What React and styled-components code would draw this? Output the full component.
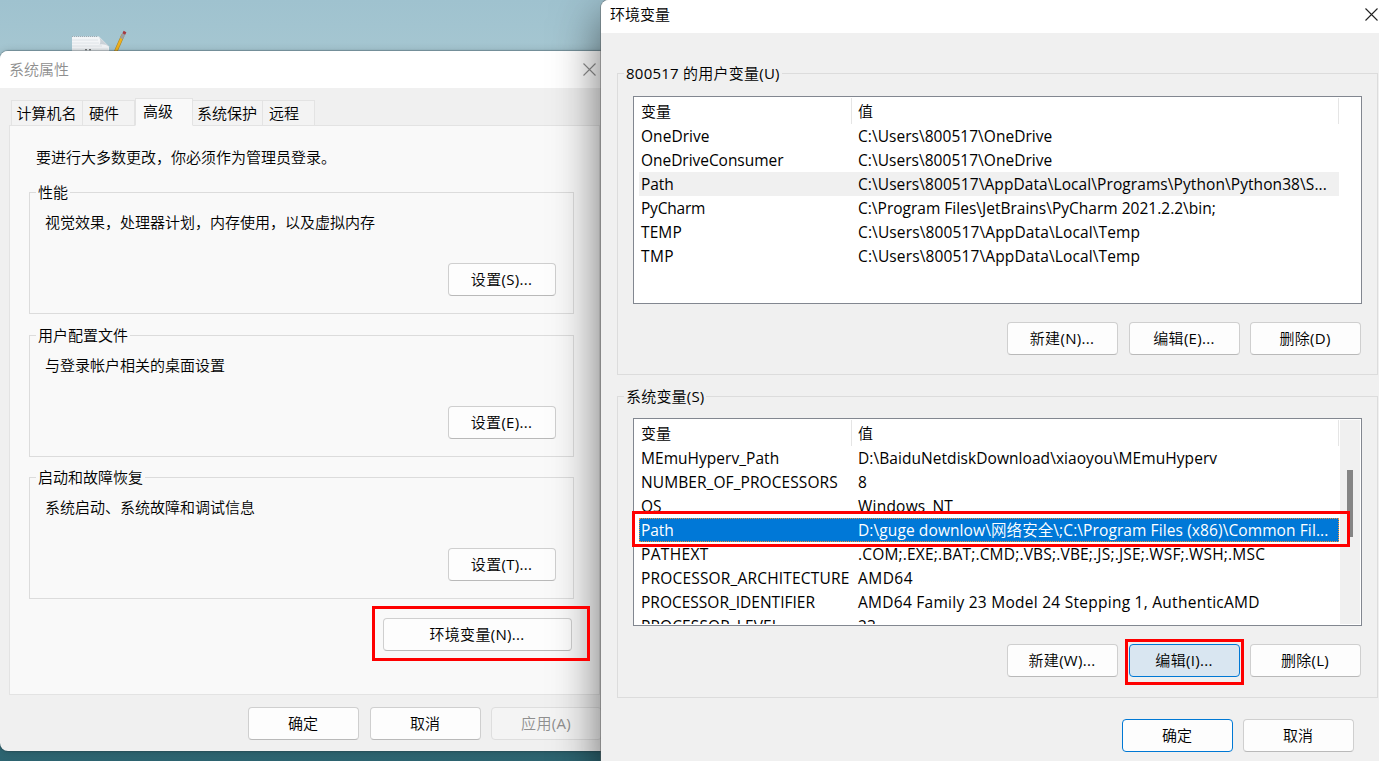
import React from "react";
import styled, { createGlobalStyle } from "styled-components";

const GlobalStyle = createGlobalStyle`
  * { box-sizing: border-box; }
  body {
    margin: 0;
    overflow: hidden;
    font-family: "Open Sans", "Noto Sans CJK SC DemiLight", "Noto Sans CJK SC", sans-serif;
    font-size: 15px;
    line-height: 20px;
    color: #000;
  }
`;

const Desktop = styled.main`
  position: relative;
  width: 1379px;
  height: 761px;
  overflow: hidden;
  background: linear-gradient(180deg, #9fc2cf 0, #a5c6d1 50px, #2f6a77 745px, #2d6470 761px);
`;

const FileIcon = styled.svg`
  position: absolute;
  left: 70px;
  top: 30px;
`;

const Window = styled.section`
  position: absolute;
  left: ${(p) => p.$x}px;
  top: ${(p) => p.$y}px;
  width: ${(p) => p.$w}px;
  height: ${(p) => p.$h}px;
  display: flex;
  flex-direction: column;
  background: #f0f0f0;
  border-radius: 8px;
  overflow: hidden;
  box-shadow: ${(p) => p.$shadow};
`;

const TitleBar = styled.header`
  display: flex;
  flex: none;
  align-items: center;
  justify-content: space-between;
  height: ${(p) => p.$h}px;
  padding: ${(p) => p.$pad};
  background: #fff;
  color: ${(p) => p.$color};
`;

const TitleText = styled.span`
  padding-bottom: 2px;
`;

const Tabs = styled.nav`
  display: flex;
  align-items: flex-end;
  height: 38px;
  padding-left: 11px;
  flex: none;
`;

const Tab = styled.div`
  width: ${(p) => p.$w}px;
  height: ${(p) => (p.$active ? 28 : 26)}px;
  padding: 2px 0 0 ${(p) => p.$pad}px;
  border: 1px solid #e3e3e3;
  border-left-width: ${(p) => (p.$first || p.$active ? 1 : 0)}px;
  border-bottom-color: ${(p) => (p.$active ? "#f9f9f9" : "#e3e3e3")};
  background: ${(p) => (p.$active ? "#f9f9f9" : "#f3f3f3")};
  white-space: nowrap;
  z-index: 1;
`;

const TabPanel = styled.div`
  width: 591px;
  height: 570px;
  margin: -1px 0 0 9px;
  padding: 21px 0 0 19px;
  border: 1px solid #e3e3e3;
  background: #f9f9f9;
  flex: none;
`;

const Notice = styled.p`
  margin: 0 0 0 7px;
`;

const Group = styled.div`
  width: ${(p) => p.$w}px;
  height: ${(p) => p.$h}px;
  margin-top: ${(p) => p.$mt}px;
  border: 1px solid #dcdcdc;
  display: flex;
  flex-direction: column;
`;

const Legend = styled.div`
  width: fit-content;
  margin: -11px 0 0 6px;
  padding: 0 2px;
  background: ${(p) => p.$bg};
  letter-spacing: ${(p) => p.$ls || 0}px;
`;

const Description = styled.p`
  margin: 10px 0 0 15px;
`;

const Actions = styled.div`
  display: flex;
  gap: ${(p) => p.$gap || 11}px;
  margin-top: ${(p) => p.$mt}px;
  padding-left: ${(p) => p.$x}px;
`;

const Button = styled.button`
  width: ${(p) => p.$w || 111}px;
  height: 33px;
  padding: 0 1px 1px 0;
  flex: none;
  font: inherit;
  letter-spacing: ${(p) => p.$ls ?? 0.3}px;
  border-radius: 4px;
  border: 1px solid #cfcfcf;
  border-bottom-color: #b9b9b9;
  background: #fdfdfd;
  color: #000;
  ${(p) => p.$kind === "disabled" && "border-color:#dedede;background:#f4f4f4;color:#8f8f8f;"}
  ${(p) => p.$kind === "default" && "border-color:#0078d4;"}
  ${(p) => p.$kind === "hot" && "border-color:#0078d4;background:#d9e6f1;"}
  ${(p) => p.$last && "margin-left:-1px;"}
`;

const Marked = styled.div`
  position: relative;
  display: flex;
`;

const Mark = styled.span`
  position: absolute;
  inset: ${(p) => p.$inset};
  border: 3px solid #fe0000;
  pointer-events: none;
  z-index: 2;
`;

const ListBox = styled.div`
  position: relative;
  width: 729px;
  height: 208px;
  margin: ${(p) => p.$mt}px 0 0 15px;
  border: 1px solid #828790;
  background: #fff;
  flex: none;
`;

const ListClip = styled.div`
  height: 205px;
  padding: 1px 0 0 5px;
  overflow: hidden;
`;

const HeadRow = styled.div`
  display: grid;
  grid-template-columns: 213px 487px;
  height: 26px;
`;

const HeadCell = styled.div`
  padding: 3px 0 0 ${(p) => p.$pad}px;
  border-right: 1px solid #e5e5e5;
`;

const Row = styled.div`
  display: grid;
  grid-template-columns: 219px 481px;
  width: 700px;
  height: 24px;
  line-height: 24px;
  font-size: 15.5px;
  background: ${(p) => (p.$selected ? "#0078d7" : p.$muted ? "#f0f0f0" : "transparent")};
  color: ${(p) => (p.$selected ? "#fff" : "#000")};
  outline: ${(p) => (p.$selected ? "1px dotted #ff9233" : "none")};
  outline-offset: -1px;
`;

const Cell = styled.span`
  padding-left: ${(p) => p.$pad || 0}px;
  letter-spacing: ${(p) => p.$ls}px;
  white-space: pre;
`;

const ScrollTrack = styled.div`
  position: absolute;
  top: 1px;
  right: 1px;
  width: 20px;
  height: 204px;
  padding: 50px 0 0 7px;
  background: #f0f0f0;
`;

const ScrollThumb = styled.div`
  width: 6px;
  height: 67px;
  background: #858585;
`;

const CloseIcon = ({ color }) => (
  <svg width="13" height="13" viewBox="0 0 13 13" fill="none" stroke={color} strokeWidth="1.1">
    <path d="M.5 .5l12 12M12.5 .5l-12 12" />
  </svg>
);

const userVars = [
  ["OneDrive", 0.05, "C:\\Users\\800517\\OneDrive", 0.04],
  ["OneDriveConsumer", -0.04, "C:\\Users\\800517\\OneDrive", 0.04],
  ["Path", -0.1, "C:\\Users\\800517\\AppData\\Local\\Programs\\Python\\Python38\\S...", 0.08],
  ["PyCharm", -0.2, "C:\\Program Files\\JetBrains\\PyCharm 2021.2.2\\bin;", 0.01],
  ["TEMP", 0.1, "C:\\Users\\800517\\AppData\\Local\\Temp", 0.13],
  ["TMP", 0.4, "C:\\Users\\800517\\AppData\\Local\\Temp", 0.13],
];

const systemVars = [
  ["MEmuHyperv_Path", 0.04, "D:\\BaiduNetdiskDownload\\xiaoyou\\MEmuHyperv", 0.06],
  ["NUMBER_OF_PROCESSORS", 0.08, "8", 0],
  ["OS", 0, "Windows_NT", 0.22],
  ["Path", -0.1, "D:\\guge downlow\\网络安全\\;C:\\Program Files (x86)\\Common Fil...", 0.1],
  ["PATHEXT", 0.35, ".COM;.EXE;.BAT;.CMD;.VBS;.VBE;.JS;.JSE;.WSF;.WSH;.MSC", 0.18],
  ["PROCESSOR_ARCHITECTURE", 0.18, "AMD64", 0.45],
  ["PROCESSOR_IDENTIFIER", 0, "AMD64 Family 23 Model 24 Stepping 1, AuthenticAMD", 0.26],
  ["PROCESSOR_LEVEL", 0.1, "23", 0.05],
];

const VariableList = ({ rows, mt, muted, selected, scroll }) => (
  <ListBox $mt={mt}>
    <ListClip>
      <HeadRow>
        <HeadCell $pad={2}>变量</HeadCell>
        <HeadCell $pad={6}>值</HeadCell>
      </HeadRow>
      {rows.map(([name, nameLs, value, valueLs], i) => (
        <Row key={name} $muted={i === muted} $selected={i === selected}>
          <Cell $pad={2} $ls={nameLs}>{name}</Cell>
          <Cell $ls={valueLs}>{value}</Cell>
        </Row>
      ))}
    </ListClip>
    {scroll && <ScrollTrack><ScrollThumb /></ScrollTrack>}
    {selected !== undefined && <Mark $inset="92px 11px 78px -2px" />}
  </ListBox>
);

const SettingsGroup = ({ title, text, button, mt }) => (
  <Group $w={545} $h={122} $mt={mt}>
    <Legend $bg="#f9f9f9">{title}</Legend>
    <Description>{text}</Description>
    <Actions $mt={31} $x={418}><Button $w={108}>{button}</Button></Actions>
  </Group>
);

export default function App() {
  return (
    <Desktop lang="zh-CN">
      <GlobalStyle />
      <FileIcon width="60" height="24" viewBox="0 0 60 24">
        <path d="M2 6.5h27l10 10V24H2z" fill="#f3f5f7" />
        <path d="M2 10h26M2 13h27M2 16h30M2 19h36" stroke="#d9dfe4" strokeWidth=".8" />
        <path d="M2 6.5h26" stroke="#9da9b1" strokeDasharray="1 1" />
        <path d="M28.500 6.500q3 4 1 8 5-1 9.500 2z" fill="#cbd2d8" />
        <path d="M15 20q1-1 2 0M19 20q1-1 2 0" stroke="#555" fill="none" />
        <path d="M53 5L45.500 22" stroke="#a98229" strokeWidth="3.400" />
        <path d="M53 5L45.500 22" stroke="#f0b21c" strokeWidth="2.400" />
        <path d="M54.500 2.500L51.500 8.500" stroke="#9a9da3" strokeWidth="3" />
        <path d="M55 1.500L53.800 4" stroke="#a63a40" strokeWidth="3" />
      </FileIcon>

      <Window $x={0} $y={51} $w={609} $h={700} $shadow="0 0 1px 1px rgba(40,60,70,.35), 0 1px 10px rgba(0,0,0,.2)">
        <TitleBar $h={37} $pad="0 13px 0 9px" $color="#8f8f8f">
          <TitleText>系统属性</TitleText>
          <CloseIcon color="#8f8f8f" />
        </TitleBar>
        <Tabs>
          <Tab $w={72} $pad={4.5} $first>计算机名</Tab>
          <Tab $w={52} $pad={6}>硬件</Tab>
          <Tab $w={58} $pad={7} $active>高级</Tab>
          <Tab $w={70} $pad={4}>系统保护</Tab>
          <Tab $w={52} $pad={6}>远程</Tab>
        </Tabs>
        <TabPanel>
          <Notice>要进行大多数更改，你必须作为管理员登录。</Notice>
          <SettingsGroup mt={25} title="性能" text="视觉效果，处理器计划，内存使用，以及虚拟内存" button="设置(S)..." />
          <SettingsGroup mt={21} title="用户配置文件" text="与登录帐户相关的桌面设置" button="设置(E)..." />
          <SettingsGroup mt={20} title="启动和故障恢复" text="系统启动、系统故障和调试信息" button="设置(T)..." />
          <Actions $mt={19} $x={354}>
            <Marked>
              <Button $w={189}>环境变量(N)...</Button>
              <Mark $inset="-12px -18px -10px -11px" />
            </Marked>
          </Actions>
        </TabPanel>
        <Actions $mt={12} $x={248}>
          <Button $ls={0}>确定</Button>
          <Button $ls={0}>取消</Button>
          <Button $kind="disabled" $last>应用(A)</Button>
        </Actions>
      </Window>

      <Window $x={601} $y={0} $w={790} $h={775} $shadow="0 0 0 1px rgba(90,90,90,.45), 0 16px 48px rgba(0,0,0,.58)">
        <TitleBar $h={33} $pad="0 13px 4px 9px" $color="#000">
          <TitleText>环境变量</TitleText>
          <CloseIcon color="#222" />
        </TitleBar>
        <Actions $mt={40} $x={16}>
          <Group $w={761} $h={302} $mt={0}>
            <Legend $bg="#f0f0f0" $ls={0.24}>800517 的用户变量(U)</Legend>
            <VariableList rows={userVars} mt={13} muted={2} />
            <Actions $mt={18} $x={389}>
              <Button>新建(N)...</Button>
              <Button>编辑(E)...</Button>
              <Button $last>删除(D)</Button>
            </Actions>
          </Group>
        </Actions>
        <Actions $mt={21} $x={16}>
          <Group $w={761} $h={302} $mt={0}>
            <Legend $bg="#f0f0f0" $ls={0.2}>系统变量(S)</Legend>
            <VariableList rows={systemVars} mt={12} selected={3} scroll />
            <Actions $mt={18} $x={389}>
              <Button>新建(W)...</Button>
              <Marked>
                <Button $kind="hot">编辑(I)...</Button>
                <Mark $inset="-5px -4px -8px -4px" />
              </Marked>
              <Button $last>删除(L)</Button>
            </Actions>
          </Group>
        </Actions>
        <Actions $mt={21} $x={521} $gap={10}>
          <Button $ls={0} $kind="default">确定</Button>
          <Button $ls={0}>取消</Button>
        </Actions>
      </Window>
    </Desktop>
  );
}
